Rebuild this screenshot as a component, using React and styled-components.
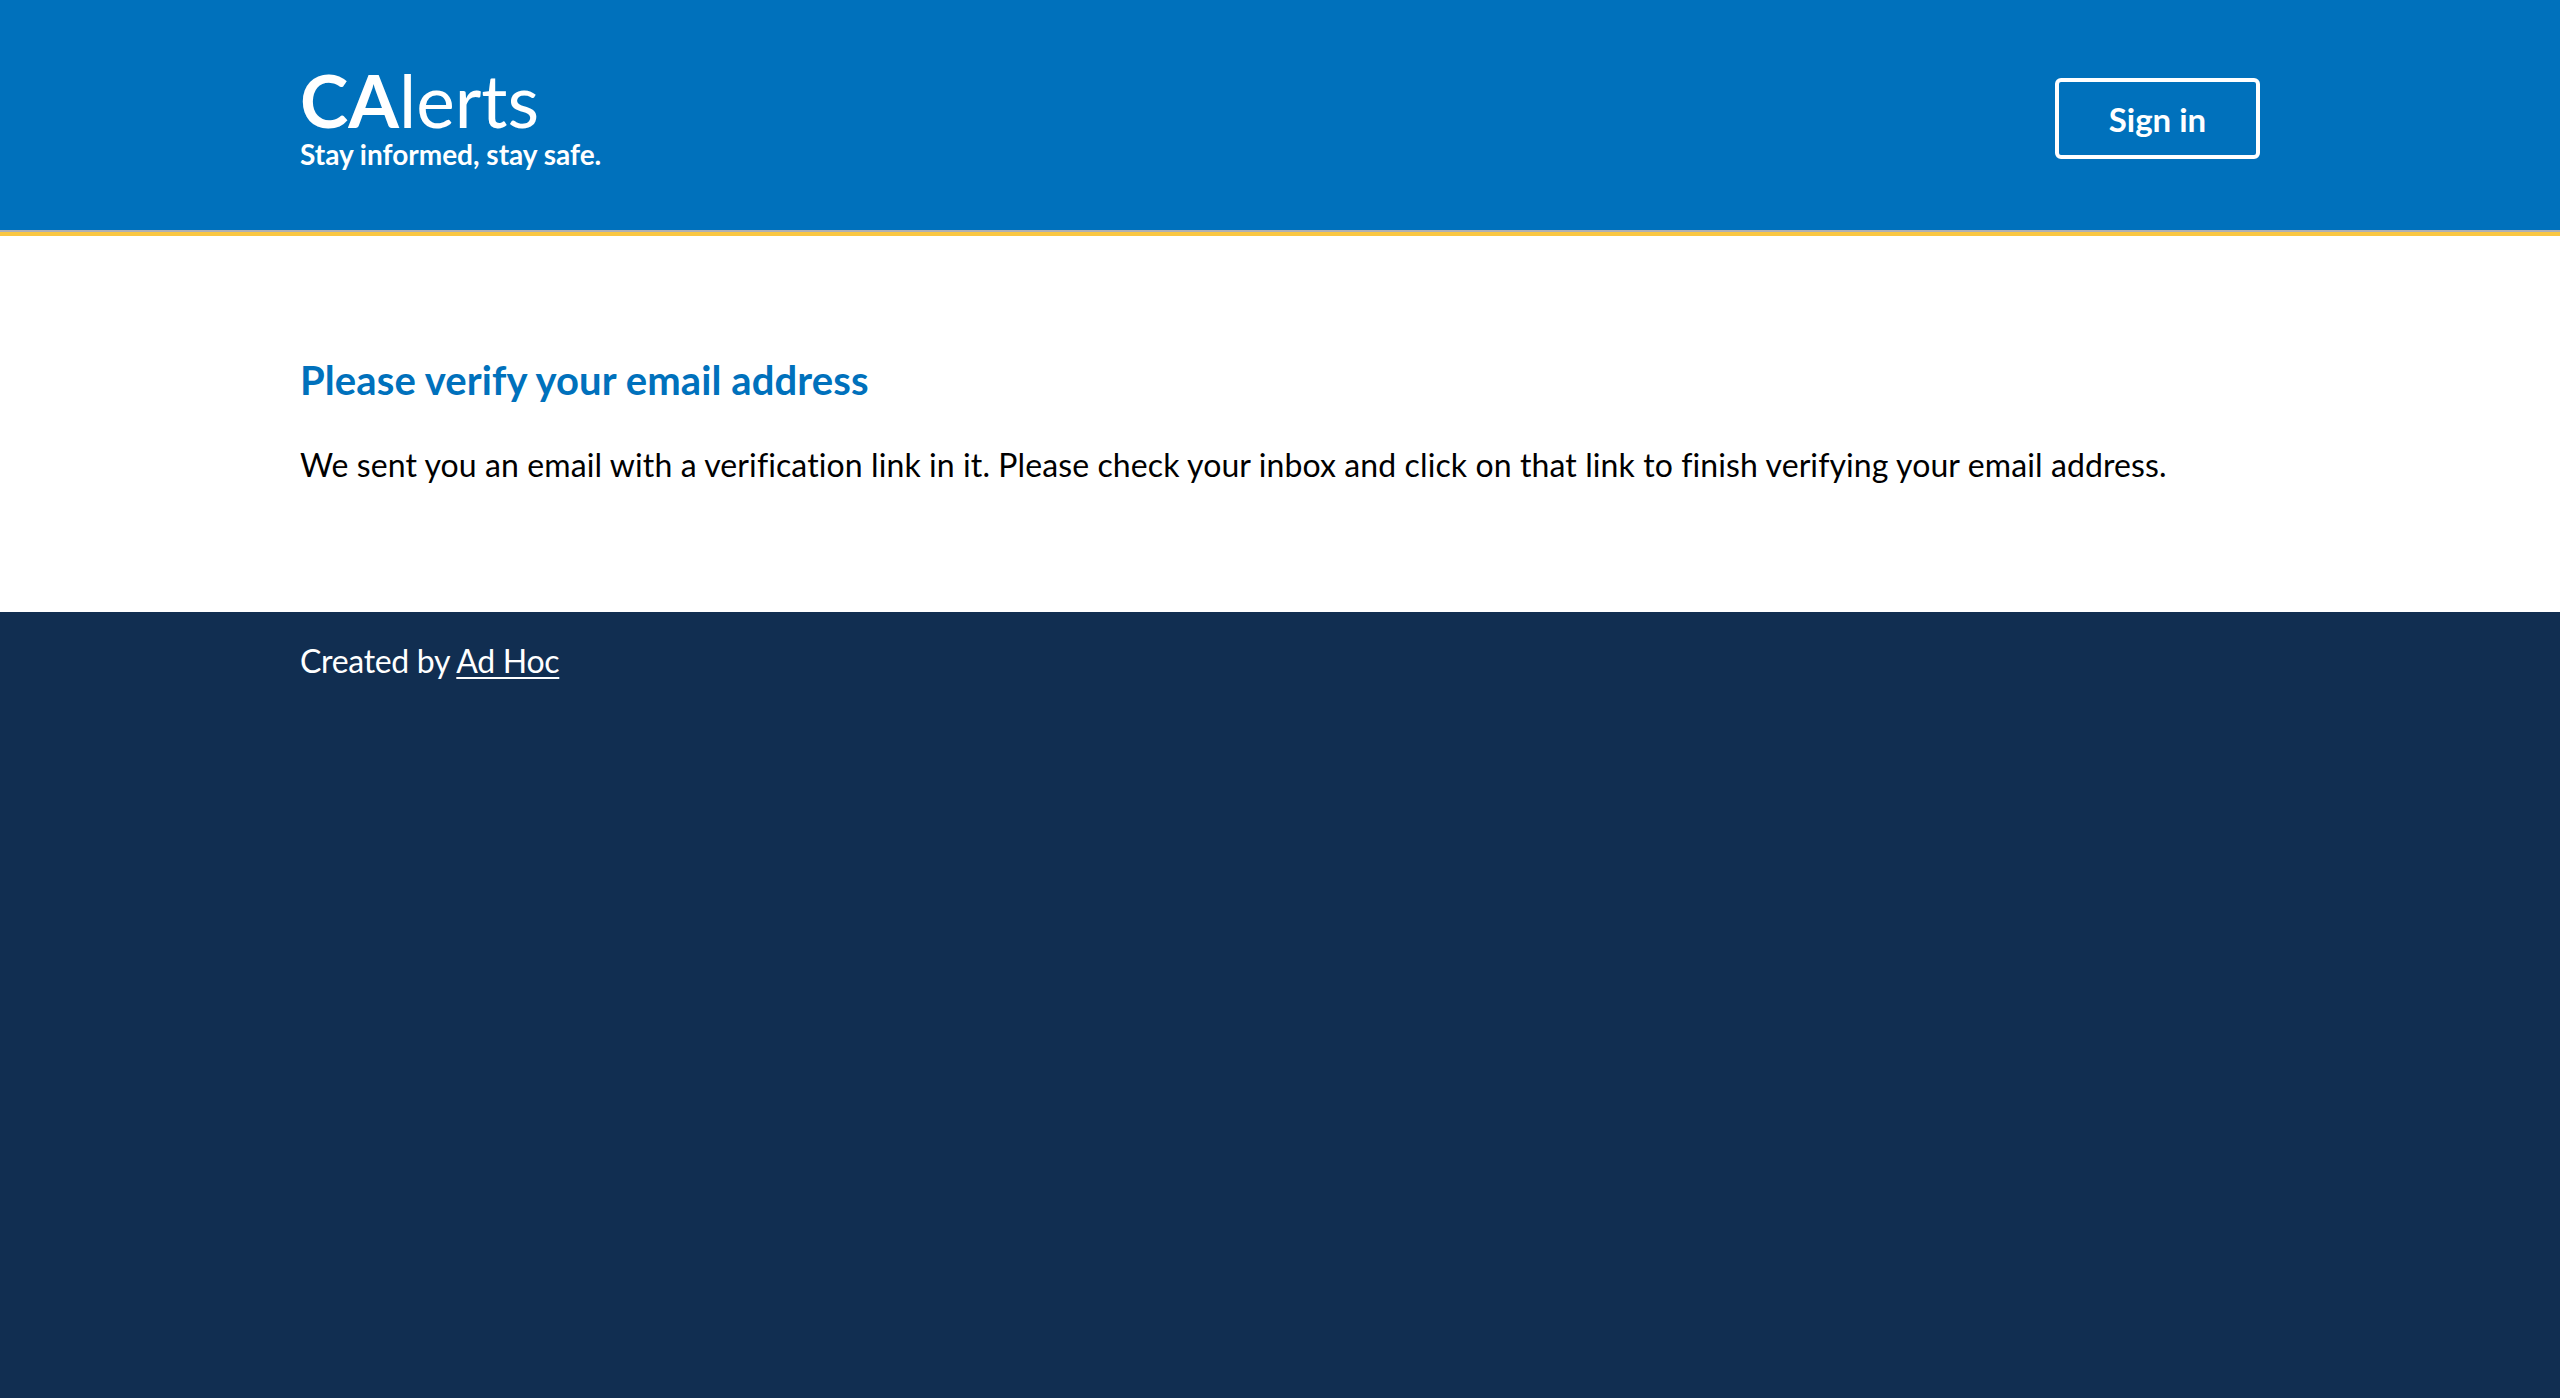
import React from 'react';
import styled, { createGlobalStyle } from 'styled-components';

const GlobalStyle = createGlobalStyle`
  html, body {
    margin: 0;
    padding: 0;
    background: #112e51;
  }
  body {
    font-family: 'Lato', 'Noto Sans', sans-serif;
    -webkit-font-smoothing: antialiased;
  }
`;

const Page = styled.div`
  min-height: 1398px;
  display: flex;
  flex-direction: column;
  background: #112e51;
`;

const Container = styled.div`
  width: 1960px;
  margin: 0 auto;
`;

const Header = styled.header`
  background: #0071bc;
  height: 230px;
  border-bottom: 2px solid #aeb0b5;
`;

const Accent = styled.div`
  height: 4px;
  background: #f9c642;
`;

const HeaderInner = styled(Container)`
  display: flex;
  align-items: flex-start;
  justify-content: space-between;
  padding-top: 64px;
`;

const Brand = styled.div`
  display: flex;
  flex-direction: column;
  color: #fff;
`;

const Logo = styled.a`
  font-size: 73px;
  line-height: 73px;
  color: #fff;
  text-decoration: none;
  font-weight: 400;

  strong {
    font-weight: 700;
  }
`;

const Tagline = styled.div`
  font-size: 28px;
  line-height: 28px;
  font-weight: 700;
  letter-spacing: 0;
  margin-top: 3px;
`;

const SignIn = styled.button`
  width: 205px;
  height: 81px;
  margin-top: 14px;
  border: 4px solid #fff;
  border-radius: 6px;
  background: transparent;
  color: #fff;
  font-family: inherit;
  font-size: 33px;
  font-weight: 700;
  cursor: pointer;
`;

const Main = styled.main`
  background: #fff;
  padding: 120px 0 123px;
`;

const Heading = styled.h1`
  margin: 0;
  color: #0071bc;
  font-size: 40px;
  line-height: 48px;
  font-weight: 700;
  letter-spacing: 0.1px;
`;

const Text = styled.p`
  margin: 37px 0 0;
  color: #000;
  font-size: 32px;
  line-height: 48px;
  letter-spacing: 0.1px;
`;

const Footer = styled.footer`
  flex: 1;
  background: #112e51;
  padding-top: 25px;
  color: #fff;
  font-size: 32px;
  line-height: 48px;
  letter-spacing: -0.3px;
`;

const FooterLink = styled.a`
  color: #fff;
  text-decoration: underline;
  text-underline-offset: 4px;
  text-decoration-thickness: 2px;
`;

export default function App() {
  return (
    <Page>
      <GlobalStyle />
      <Header>
        <HeaderInner>
          <Brand>
            <Logo href="#">
              <strong>CA</strong>lerts
            </Logo>
            <Tagline>Stay informed, stay safe.</Tagline>
          </Brand>
          <SignIn>Sign in</SignIn>
        </HeaderInner>
      </Header>
      <Accent />
      <Main>
        <Container>
          <Heading>Please verify your email address</Heading>
          <Text>
            We sent you an email with a verification link in it. Please check your inbox and click on that link to finish verifying your email address.
          </Text>
        </Container>
      </Main>
      <Footer>
        <Container>
          Created by <FooterLink href="#">Ad Hoc</FooterLink>
        </Container>
      </Footer>
    </Page>
  );
}
